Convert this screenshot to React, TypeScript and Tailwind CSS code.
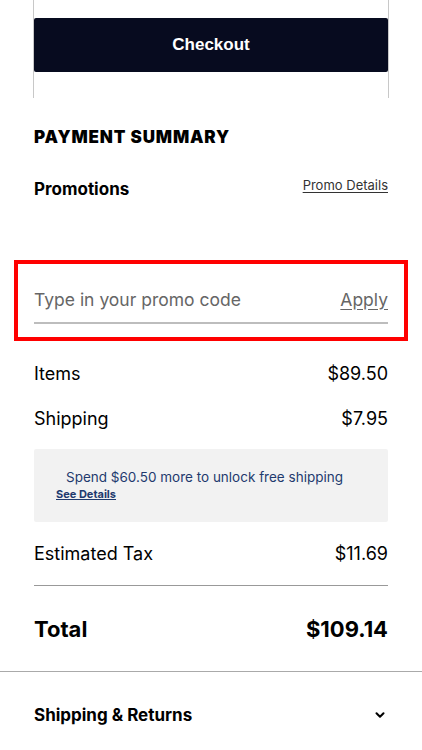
import { ChevronDown } from "lucide-react";

export default function App() {
  return (
    <div className="min-h-screen bg-white text-black font-['Inter','Liberation_Sans',sans-serif]">
      {/* Checkout */}
      <div className="mx-[33px] h-[98px] border-x border-[#c8c8c8] pt-[18px]">
        <button className="flex h-[54px] w-full items-center justify-center rounded-[2px] bg-[#070b1f] font-['Liberation_Sans',Arial,sans-serif] text-[17px] font-bold text-white">
          Checkout
        </button>
      </div>

      <div className="px-[34px] pt-[29px]">
        <h2 className="text-[17px] font-black uppercase leading-[20px] tracking-[0.05em]">
          Payment Summary
        </h2>

        <div className="mt-[32px] flex items-start justify-between">
          <h3 className="text-[17px] font-bold leading-[20px]">Promotions</h3>
          <a className="mt-[-4px] text-[13px] leading-[20px] text-[#333] underline underline-offset-2">
            Promo Details
          </a>
        </div>
      </div>

      {/* Promo code */}
      <div className="mx-[14px] mt-[61px] border-[4px] border-[#ff0000] px-[16px] pb-[13px] pt-[24px]">
        <div className="flex items-center justify-between border-b-2 border-[#bdbdbd] pb-[10px]">
          <span className="text-[17.5px] leading-[24px] text-[#666]">
            Type in your promo code
          </span>
          <span className="text-[17.5px] leading-[24px] text-[#666] underline underline-offset-[3px]">
            Apply
          </span>
        </div>
      </div>

      <div className="px-[34px]">
        <div className="mt-[21px] flex items-center justify-between text-[18px] leading-[24px]">
          <span>Items</span>
          <span>$89.50</span>
        </div>
        <div className="mt-[21px] flex items-center justify-between text-[18px] leading-[24px]">
          <span>Shipping</span>
          <span>$7.95</span>
        </div>

        <div className="mt-[18px] flex h-[73px] flex-col rounded-[2px] bg-[#f2f2f2] pl-[22px] pt-[19px]">
          <p className="pl-[10px] text-[13.5px] leading-[18px] text-[#1f3a6e]">
            Spend $60.50 more to unlock free shipping
          </p>
          <a className="block text-[11px] font-bold leading-[16px] text-[#1f3a6e] underline">
            See Details
          </a>
        </div>

        <div className="mt-[20px] flex items-center justify-between pb-[19px] text-[18px] leading-[24px]">
          <span>Estimated Tax</span>
          <span>$11.69</span>
        </div>

        <div className="flex items-center justify-between border-t border-[#999] pb-[28px] pt-[29px]">
          <span className="text-[22px] font-bold leading-[28px]">Total</span>
          <span className="text-[22px] font-bold leading-[28px]">$109.14</span>
        </div>
      </div>

      <div className="border-t border-[#aaa] px-[34px] pt-[32px]">
        <div className="flex items-center justify-between">
          <span className="text-[17px] font-bold leading-[22px]">Shipping &amp; Returns</span>
          <ChevronDown className="mr-[1px] h-[14px] w-[14px]" strokeWidth={3.5} />
        </div>
      </div>
    </div>
  );
}
